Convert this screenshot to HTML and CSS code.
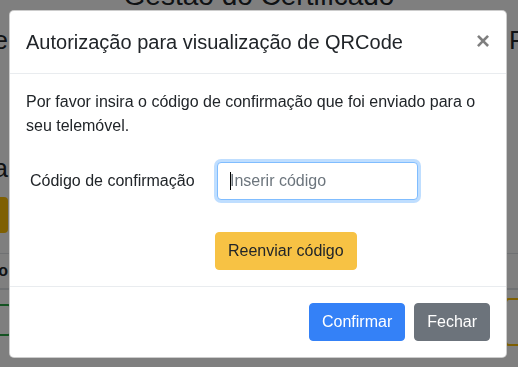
FILE: index.html
```html
<!DOCTYPE html>
<html lang="pt">
<head>
    <meta charset="UTF-8">
    <meta name="viewport" content="width=device-width, initial-scale=1.0">
    <title>Gestão do Certificado</title>
    <link rel="stylesheet" href="styles.css">
</head>
<body>
    <!-- Página por trás do modal -->
    <div class="page">
        <h1 class="page-title">Gestão do Certificado</h1>
        <div class="page-row page-info">
            <span class="edge-left big">Nome de</span>
            <span class="edge-right big">FCT</span>
        </div>
        <div class="page-row page-sub">
            <span class="edge-left big">Validada</span>
        </div>
        <div class="page-row page-actions">
            <span class="edge-left page-btn">Ver</span>
        </div>
        <div class="page-table">
            <div class="table-head">
                <span class="edge-left bold">Estado</span>
            </div>
            <div class="table-row">
                <span class="edge-left page-outline"></span>
                <span class="edge-right page-outline-warn"></span>
            </div>
        </div>
    </div>

    <!-- Modal -->
    <div class="backdrop">
        <div class="modal">
            <div class="modal-header">
                <h5 class="modal-title">Autorização para visualização de QRCode</h5>
                <button type="button" class="close">&times;</button>
            </div>
            <div class="modal-body">
                <p>Por favor insira o código de confirmação que foi enviado para o seu telemóvel.</p>
                <div class="form-row">
                    <label for="codigo">Código de confirmação</label>
                    <div class="input-wrap">
                        <input type="text" id="codigo" placeholder="Inserir código">
                        <span class="caret"></span>
                    </div>
                </div>
                <button type="button" class="btn btn-warning reenviar">Reenviar código</button>
            </div>
            <div class="modal-footer">
                <button type="button" class="btn btn-primary">Confirmar</button>
                <button type="button" class="btn btn-secondary">Fechar</button>
            </div>
        </div>
    </div>
</body>
</html>
```

FILE: styles.css
```css
body {
    margin: 0;
    font-family: "Liberation Sans", Arial, sans-serif;
    font-size: 16px;
    color: #212529;
    background-color: #fff;
    overflow: hidden;
}

/* página de fundo */
.page {
    height: 367px;
    overflow: hidden;
}

.page-title {
    margin: -21px 0 0 0;
    font-size: 28px;
    font-weight: normal;
    line-height: 1.2;
    text-align: center;
}

.page-row {
    display: flex;
    justify-content: space-between;
    align-items: center;
}

.page-info {
    margin-top: 10px;
}

.big {
    font-size: 26px;
    line-height: 34px;
}

.bold {
    font-weight: bold;
}

.edge-left {
    display: block;
    width: 120px;
    margin-left: -112px;
    text-align: right;
}

.edge-right {
    display: block;
    width: 120px;
    margin-right: -111px;
    text-align: left;
}

.page-sub {
    margin-top: 94px;
}

.page-actions {
    margin-top: 12px;
}

.page-btn {
    height: 36px;
    background-color: #ffc107;
    border-radius: 4px;
    color: transparent;
}

.page-table {
    margin-top: 20px;
    border-top: 1px solid #dee2e6;
}

.table-head {
    display: flex;
    padding: 8px 0;
    border-bottom: 2px solid #dee2e6;
}

.table-row {
    display: flex;
    justify-content: space-between;
    padding-top: 14px;
}

.page-outline {
    height: 28px;
    border: 2px solid #28a745;
    border-radius: 4px;
}

.page-outline-warn {
    height: 44px;
    margin-top: -6px;
    border: 2px solid #ffc107;
    border-radius: 4px;
}

/* modal */
.backdrop {
    position: fixed;
    top: 0;
    left: 0;
    right: 0;
    bottom: 0;
    background-color: rgba(0, 0, 0, 0.5);
}

.modal {
    width: 498px;
    margin: 10px 0 0 9px;
    background-color: #fff;
    border: 1px solid rgba(0, 0, 0, 0.2);
    border-radius: 5px;
    box-sizing: border-box;
}

.modal-header {
    display: flex;
    align-items: flex-start;
    padding: 16px;
    border-bottom: 1px solid #e9ecef;
}

.modal-title {
    margin: 0;
    font-size: 20px;
    font-weight: normal;
    line-height: 1.5;
}

.close {
    margin: -16px -16px -16px auto;
    padding: 18px 16px 16px 16px;
    background: none;
    border: 0;
    font-family: "Liberation Sans", Arial, sans-serif;
    font-size: 24px;
    font-weight: bold;
    line-height: 1;
    color: #000;
    opacity: 0.5;
}

.modal-body {
    padding: 16px;
}

.modal-body p {
    margin: 0 0 16px 0;
    line-height: 1.5;
}

.form-row {
    display: flex;
    align-items: center;
    padding-top: 8px;
    margin-bottom: 32px;
}

.form-row label {
    width: 187px;
    padding-left: 4px;
    line-height: 1.5;
}

.input-wrap {
    position: relative;
}

.input-wrap input {
    display: block;
    width: 201px;
    height: 38px;
    box-sizing: border-box;
    padding: 6px 12px;
    font-family: "Liberation Sans", Arial, sans-serif;
    font-size: 16px;
    color: #495057;
    border: 1px solid #80bdff;
    border-radius: 4px;
    box-shadow: 0 0 0 3px rgba(0, 123, 255, 0.25);
    outline: none;
}

.input-wrap input::placeholder {
    color: #6c757d;
}

.caret {
    position: absolute;
    left: 13px;
    top: 10px;
    width: 1px;
    height: 18px;
    background-color: #000;
}

.btn {
    padding: 6px 12px;
    font-family: "Liberation Sans", Arial, sans-serif;
    font-size: 16px;
    line-height: 24px;
    border: 1px solid transparent;
    border-radius: 4px;
}

.btn-warning {
    background-color: #f7c244;
    border-color: #f7c244;
    color: #212529;
}

.reenviar {
    margin-left: 189px;
}

.btn-primary {
    background-color: #3481f7;
    border-color: #3481f7;
    color: #fff;
}

.btn-secondary {
    background-color: #6c737b;
    border-color: #6c737b;
    color: #fff;
}

.modal-footer {
    display: flex;
    justify-content: flex-end;
    gap: 9px;
    padding: 16px;
    border-top: 1px solid #e9ecef;
}
```
